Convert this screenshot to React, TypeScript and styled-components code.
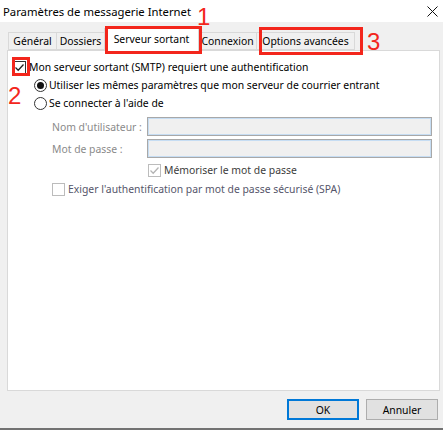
import styled, { createGlobalStyle } from "styled-components";

const GlobalStyle = createGlobalStyle`
  html, body {
    margin: 0;
    padding: 0;
    background: #f0f0f0;
  }
  body {
    font-family: "Noto Sans", "Open Sans", sans-serif;
    font-size: 10.4px;
    color: #000;
  }
`;

const tabs = [
  { label: "Général", width: 49 },
  { label: "Dossiers", width: 49 },
  { label: "Serveur sortant", width: 95, active: true },
  { label: "Connexion", width: 59 },
  { label: "Options avancées", width: 99 },
];

function Check({ color }: { color: string }) {
  return (
    <svg width="11" height="11" viewBox="0 0 11 11">
      <path d="M1.5 5.5 L4.2 8.2 L9.5 2.5" fill="none" stroke={color} strokeWidth="1.3" />
    </svg>
  );
}

export default function App() {
  return (
    <Window>
      <GlobalStyle />
      <TitleBar>
        <Title>Paramètres de messagerie Internet</Title>
        <svg width="11" height="11" viewBox="0 0 11 11">
          <path d="M0.5 0.5 L10.5 10.5 M10.5 0.5 L0.5 10.5" stroke="#111" strokeWidth="1" />
        </svg>
      </TitleBar>

      <TabStrip>
        {tabs.map((t) => (
          <Tab key={t.label} $width={t.width} $active={!!t.active}>
            {t.label}
          </Tab>
        ))}
      </TabStrip>

      <Panel>
        <OptionRow $indent={5}>
          <CheckBox>
            <Check color="#222" />
          </CheckBox>
          <OptionText>Mon serveur sortant (SMTP) requiert une authentification</OptionText>
        </OptionRow>
        <OptionRow $indent={26}>
          <Radio $selected />
          <OptionText>Utiliser les mêmes paramètres que mon serveur de courrier entrant</OptionText>
        </OptionRow>
        <OptionRow $indent={26}>
          <Radio />
          <OptionText>Se connecter à l'aide de</OptionText>
        </OptionRow>

        <FieldRow $gap={5}>
          <FieldLabel>Nom d'utilisateur :</FieldLabel>
          <TextBox />
        </FieldRow>
        <FieldRow $gap={3}>
          <FieldLabel>Mot de passe :</FieldLabel>
          <TextBox />
        </FieldRow>

        <OptionRow $indent={140} $gap={3}>
          <CheckBox $disabled>
            <Check color="#b4b4b4" />
          </CheckBox>
          <OptionText $color="#3c3c3c">Mémoriser le mot de passe</OptionText>
        </OptionRow>
        <OptionRow $indent={44} $gap={1}>
          <CheckBox $disabled />
          <OptionText $color="#55556a">Exiger l'authentification par mot de passe sécurisé (SPA)</OptionText>
        </OptionRow>
      </Panel>

      <ButtonRow>
        <Button $default>OK</Button>
        <Button>Annuler</Button>
      </ButtonRow>

      <Frame style={{ left: 105, top: 26, width: 97, height: 28 }} />
      <Frame style={{ left: 259, top: 27, width: 104, height: 28 }} />
      <Frame style={{ left: 12, top: 57, width: 18, height: 19 }} />
      <Marker style={{ left: 197, top: 5 }}>1</Marker>
      <Marker style={{ left: 8, top: 84 }}>2</Marker>
      <Marker style={{ left: 367, top: 30 }}>3</Marker>
    </Window>
  );
}

const Window = styled.div`
  position: relative;
  width: 443px;
  height: 430px;
  box-sizing: border-box;
  border-bottom: 2px solid #727272;
  background: #f0f0f0;
  display: flex;
  flex-direction: column;
  overflow: hidden;
`;

const TitleBar = styled.div`
  height: 22px;
  background: #fff;
  display: flex;
  align-items: center;
  justify-content: space-between;
  padding: 0 5px 0 3px;
  flex-shrink: 0;
`;

const Title = styled.div`
  font-size: 11.3px;
  color: #000;
`;

const TabStrip = styled.div`
  height: 28px;
  display: flex;
  align-items: flex-end;
  padding-left: 8px;
  flex-shrink: 0;
  position: relative;
  z-index: 1;
`;

const Tab = styled.div<{ $width: number; $active: boolean }>`
  width: ${(p) => p.$width}px;
  height: ${(p) => (p.$active ? 23 : 18)}px;
  margin-left: -1px;
  margin-bottom: ${(p) => (p.$active ? -1 : 0)}px;
  box-sizing: border-box;
  border: 1px solid #d9d9d9;
  border-bottom: ${(p) => (p.$active ? "none" : "1px solid #d9d9d9")};
  background: ${(p) => (p.$active ? "#fff" : "#f0f0f0")};
  display: flex;
  align-items: center;
  justify-content: center;
  white-space: nowrap;
  padding-bottom: ${(p) => (p.$active ? 2 : 0)}px;

  &:first-child {
    margin-left: 0;
  }
`;

const Panel = styled.div`
  flex: 1;
  margin: 0 3px 0 7px;
  background: #fff;
  border: 1px solid #d9d9d9;
  padding-top: 7px;
  display: flex;
  flex-direction: column;
`;

const OptionRow = styled.div<{ $indent: number; $gap?: number }>`
  height: 18px;
  display: flex;
  align-items: center;
  padding-left: ${(p) => p.$indent}px;
  margin-top: ${(p) => p.$gap ?? 0}px;
`;

const OptionText = styled.span<{ $color?: string }>`
  color: ${(p) => p.$color ?? "#000"};
  white-space: nowrap;
`;

const CheckBox = styled.span<{ $disabled?: boolean }>`
  width: 13px;
  height: 13px;
  box-sizing: border-box;
  border: 1px solid ${(p) => (p.$disabled ? "#bcbcbc" : "#333")};
  background: #fff;
  display: flex;
  align-items: center;
  justify-content: center;
  margin-right: 3px;
  flex-shrink: 0;
`;

const Radio = styled.span<{ $selected?: boolean }>`
  width: 13px;
  height: 13px;
  box-sizing: border-box;
  border-radius: 50%;
  border: 1px solid #333;
  background: #fff;
  margin-right: 2px;
  flex-shrink: 0;
  display: flex;
  align-items: center;
  justify-content: center;

  &::after {
    content: "";
    width: 7px;
    height: 7px;
    border-radius: 50%;
    background: ${(p) => (p.$selected ? "#111" : "transparent")};
  }
`;

const FieldRow = styled.div<{ $gap: number }>`
  display: flex;
  align-items: center;
  height: 19px;
  margin-top: ${(p) => p.$gap}px;
  padding: 0 7px 0 44px;
`;

const FieldLabel = styled.span`
  width: 95px;
  color: #8a8a8a;
  white-space: nowrap;
  flex-shrink: 0;
`;

const TextBox = styled.div`
  flex: 1;
  height: 19px;
  box-sizing: border-box;
  background: #f0f0f0;
  border: 1px solid #a8a8a8;
  box-shadow: inset 1px 1px 0 #c6ddf3, inset -1px -1px 0 #c6ddf3;
`;

const ButtonRow = styled.div`
  height: 37px;
  flex-shrink: 0;
  display: flex;
  justify-content: flex-end;
  align-items: flex-start;
  gap: 7px;
  padding: 8px 5px 0 0;
  box-sizing: border-box;
`;

const Button = styled.div<{ $default?: boolean }>`
  width: 72px;
  height: 21px;
  box-sizing: border-box;
  background: #e1e1e1;
  border: ${(p) => (p.$default ? "2px solid #0078d7" : "1px solid #adadad")};
  display: flex;
  align-items: center;
  justify-content: center;
  color: #000;
`;

const Frame = styled.div`
  position: absolute;
  box-sizing: border-box;
  border: 3px solid #f3261c;
  z-index: 5;
  pointer-events: none;
`;

const Marker = styled.div`
  position: absolute;
  font-family: "Liberation Sans", Arial, sans-serif;
  font-size: 24px;
  line-height: 24px;
  color: #f3261c;
  z-index: 5;
`;
